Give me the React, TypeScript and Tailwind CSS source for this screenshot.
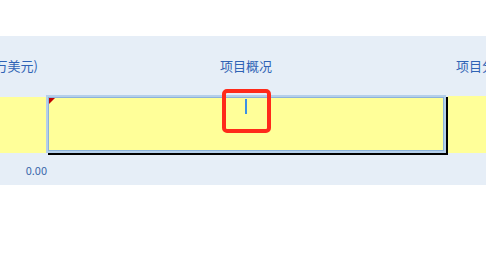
import React from "react";

const font = { fontFamily: '"Microsoft YaHei", "Noto Sans CJK SC", "Noto Sans", sans-serif' };

export default function App() {
  return (
    <div className="w-[486px] h-[259px] bg-white overflow-hidden relative" style={font}>
      <div className="h-[36px]" />

      {/* header row */}
      <div className="h-[59px] bg-[#e6eef7] flex text-[13px] text-[#2f63b5]">
        <div className="w-[46px] overflow-hidden flex justify-end items-center pr-[8px] whitespace-nowrap">
          投资金额(万美元)
        </div>
        <div className="w-[402px] flex items-center justify-center pr-[2px]">项目概况</div>
        <div className="flex-1 flex items-center pl-[8px] whitespace-nowrap overflow-hidden">项目分类</div>
      </div>

      {/* editing row */}
      <div className="h-[58px] bg-[#e6eef7] flex">
        <div className="w-[46px] pt-[2px]">
          <div className="h-[56px] bg-[#ffff99]" />
        </div>
        <div className="w-[400px] relative z-10 border-2 border-[#b5cfea] shadow-[2px_2px_0_#000]">
          <div className="h-full border border-[#8cb2da] bg-[#ffff99] relative">
            <svg className="absolute left-0 top-0" width="6" height="6" viewBox="0 0 6 6">
              <polygon points="0,0 6,0 0,6" fill="#c00000" />
            </svg>
            <div className="absolute left-[196px] top-[1px] w-[2px] h-[15px] bg-[#3c90e4]" />
          </div>
        </div>
        <div className="w-[2px]" />
        <div className="flex-1 pt-[1px]">
          <div className="h-[57px] bg-[#ffff99]" />
        </div>
      </div>

      {/* totals row */}
      <div className="h-[32px] bg-[#e6eef7] flex text-[11px] text-[#3a66aa]">
        <div className="w-[47px] flex justify-end items-center pt-[2px]">0.00</div>
      </div>

      {/* annotation */}
      <div className="absolute left-[222px] top-[89px] w-[49px] h-[44px] border-[4px] border-[#ff2a1a] rounded-[5px] z-20" />
    </div>
  );
}
